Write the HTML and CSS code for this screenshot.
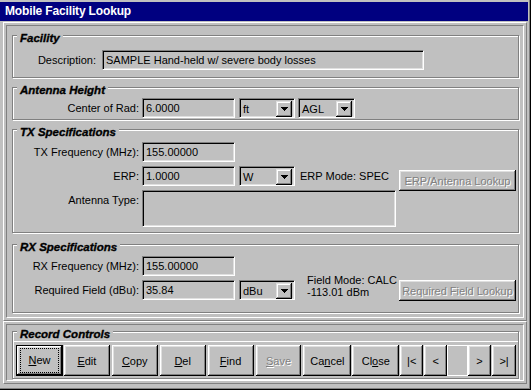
FILE: index.html
```html
<!DOCTYPE html>
<html>
<head>
<meta charset="utf-8">
<link rel="stylesheet" href="styles.css">
</head>
<body>
<div class="window">
  <div class="titlebar">Mobile Facility Lookup</div>
  <div class="panel panel-top">
    <div class="panel-in">
      <div class="group g-fac">
        <div class="gtitle">Facility</div>
        <div class="row r-desc">
          <div class="lbl lbl-desc">Description:</div>
          <div class="field f-desc">SAMPLE Hand-held w/ severe body losses</div>
        </div>
      </div>
      <div class="group g-ant">
        <div class="gtitle">Antenna Height</div>
        <div class="row r-first-ant">
          <div class="lbl">Center of Rad:</div>
          <div class="field f-num">6.0000</div>
          <div class="combo c-unit"><span class="ctext">ft</span><span class="dd"><svg width="7" height="4" viewBox="0 0 7 4"><rect x="0" y="0" width="7" height="1"/><rect x="1" y="1" width="5" height="1"/><rect x="2" y="2" width="3" height="1"/><rect x="3" y="3" width="1" height="1"/></svg></span></div>
          <div class="combo c-agl"><span class="ctext">AGL</span><span class="dd"><svg width="7" height="4" viewBox="0 0 7 4"><rect x="0" y="0" width="7" height="1"/><rect x="1" y="1" width="5" height="1"/><rect x="2" y="2" width="3" height="1"/><rect x="3" y="3" width="1" height="1"/></svg></span></div>
        </div>
      </div>
      <div class="group g-tx">
        <div class="gtitle">TX Specifications</div>
        <div class="row r-tx1">
          <div class="lbl">TX Frequency (MHz):</div>
          <div class="field f-num">155.00000</div>
        </div>
        <div class="row r-tx2">
          <div class="lbl">ERP:</div>
          <div class="field f-num">1.0000</div>
          <div class="combo c-unit"><span class="ctext">W</span><span class="dd"><svg width="7" height="4" viewBox="0 0 7 4"><rect x="0" y="0" width="7" height="1"/><rect x="1" y="1" width="5" height="1"/><rect x="2" y="2" width="3" height="1"/><rect x="3" y="3" width="1" height="1"/></svg></span></div>
          <div class="mode">ERP Mode: SPEC</div>
          <div class="btn btn-dis btn-lookup b-erp">ERP/Antenna Lookup</div>
        </div>
        <div class="row r-tx3">
          <div class="lbl lbl-top">Antenna Type:</div>
          <div class="field f-ant"></div>
        </div>
      </div>
      <div class="group g-rx">
        <div class="gtitle">RX Specifications</div>
        <div class="row r-rx1">
          <div class="lbl">RX Frequency (MHz):</div>
          <div class="field f-num">155.00000</div>
        </div>
        <div class="row r-rx2">
          <div class="lbl">Required Field (dBu):</div>
          <div class="field f-num">35.84</div>
          <div class="combo c-unit"><span class="ctext">dBu</span><span class="dd"><svg width="7" height="4" viewBox="0 0 7 4"><rect x="0" y="0" width="7" height="1"/><rect x="1" y="1" width="5" height="1"/><rect x="2" y="2" width="3" height="1"/><rect x="3" y="3" width="1" height="1"/></svg></span></div>
          <div class="fmode">Field Mode: CALC<br>-113.01 dBm</div>
          <div class="btn btn-dis btn-lookup b-req">Required Field Lookup</div>
        </div>
      </div>
    </div>
  </div>
  <div class="panel panel-bot">
    <div class="panel-in panel-in-bot">
      <div class="group g-rec">
        <div class="gtitle">Record Controls</div>
        <div class="btnbar">
          <div class="btn btn-rec btn-default"><span class="focus"><u>N</u>ew</span></div>
          <div class="btn btn-rec"><u>E</u>dit</div>
          <div class="btn btn-rec"><u>C</u>opy</div>
          <div class="btn btn-rec"><u>D</u>el</div>
          <div class="btn btn-rec"><u>F</u>ind</div>
          <div class="btn btn-rec btn-dis"><u>S</u>ave</div>
          <div class="btn btn-rec b-cancel">Ca<u>n</u>cel</div>
          <div class="btn btn-rec b-close">Cl<u>o</u>se</div>
          <div class="btn btn-nav b-first">|&lt;</div>
          <div class="btn btn-nav b-prev">&lt;</div>
          <div class="navbox"></div>
          <div class="btn btn-nav b-next">&gt;</div>
          <div class="btn btn-nav b-last">&gt;|</div>
        </div>
      </div>
    </div>
  </div>
</div>
</body>
</html>
```
FILE: styles.css
```css
* { box-sizing: border-box; }
html, body { margin: 0; padding: 0; background: #c0c0c0; }
body { font-family: "Liberation Sans", Arial, sans-serif; font-size: 11px; color: #000; }

.window {
  width: 531px;
  height: 390px;
  padding: 2px 3px 3px 0;
  background: #c0c0c0;
  box-shadow: inset -1px -1px 0 #000, inset -2px -2px 0 #808080;
  overflow: hidden;
}

.titlebar {
  height: 19px;
  background: #000080;
  color: #fff;
  font-weight: bold;
  font-size: 12px;
  letter-spacing: -0.15px;
  line-height: 19px;
  padding-left: 5px;
}

.panel {
  margin: 0 1px 0 3px;
  border-top: 1px solid #fff;
  border-left: 1px solid #fff;
  border-right: 1px solid #808080;
  border-bottom: 1px solid #808080;
  padding: 2px;
}
.panel-top { margin-top: 1px; }
.panel-in {
  border-top: 1px solid #808080;
  border-left: 1px solid #808080;
  border-right: 1px solid #fff;
  border-bottom: 1px solid #fff;
  padding: 9px 4px 4px 5px;
}
.panel-in-bot { padding-top: 6px; padding-bottom: 1px; }

.group {
  border: 1px solid #808080;
  box-shadow: inset 1px 1px 0 #fff, 1px 1px 0 #fff;
  margin-bottom: 9px;
}
.group:last-child { margin-bottom: 0; }
.gtitle {
  display: table;
  margin: -4px 0 0 4px;
  padding: 0 3px;
  background: #c0c0c0;
  font-weight: bold;
  font-style: italic;
  font-size: 11.5px;
  line-height: 12px;
  height: 12px;
  -webkit-text-stroke: 0.35px #000;
}

.row { display: flex; align-items: center; }
.lbl { width: 126px; text-align: right; margin-right: 3px; white-space: nowrap; }
.lbl-desc { width: 83px; margin-right: 6px; }
.lbl-top { align-self: flex-start; padding-top: 4px; }

.field {
  height: 20px;
  background: #c0c0c0;
  border-top: 1px solid #808080;
  border-left: 1px solid #808080;
  border-bottom: 1px solid #fff;
  border-right: 1px solid #fff;
  box-shadow: inset 1px 1px 0 #000, inset -1px -1px 0 #dfdfdf;
  padding: 0 3px;
  line-height: 18px;
  white-space: nowrap;
  overflow: hidden;
}
.f-desc { width: 322px; }
.f-num { width: 93px; }
.f-ant { width: 254px; height: 37px; }

.combo {
  display: flex;
  height: 20px;
  width: 56px;
  margin-left: 4px;
  padding: 2px;
  background: #c0c0c0;
  border-top: 1px solid #808080;
  border-left: 1px solid #808080;
  border-bottom: 1px solid #fff;
  border-right: 1px solid #fff;
  box-shadow: inset 1px 1px 0 #000, inset -1px -1px 0 #dfdfdf;
}
.c-agl { width: 57px; margin-left: 3px; }
.ctext { flex: 1; line-height: 16px; padding-left: 1px; }
.dd {
  width: 16px;
  height: 16px;
  display: flex;
  align-items: center;
  justify-content: center;
  background: #c0c0c0;
  box-shadow: inset -1px -1px 0 #000, inset 1px 1px 0 #dfdfdf, inset -2px -2px 0 #808080, inset 2px 2px 0 #fff;
}
.dd svg { display: block; fill: #000; margin-top: 0; }

.mode { margin-left: 5px; line-height: 20px; }
.fmode { margin-left: 12px; line-height: 12px; align-self: flex-start; margin-top: -6px; }

.btn {
  display: flex;
  align-items: center;
  justify-content: center;
  background: #c0c0c0;
  box-shadow: inset -1px -1px 0 #000, inset 1px 1px 0 #fff, inset -2px -2px 0 #808080, inset 2px 2px 0 #dfdfdf;
  white-space: nowrap;
}
.btn-dis { color: #808080; text-shadow: 1px 1px 0 #fff; }
.btn-lookup { width: 117px; height: 21px; margin-left: auto; margin-right: 2px; }
.r-tx2 { align-items: flex-start; }
.r-tx2 .lbl { line-height: 20px; }
.b-erp { margin-top: 4px; margin-bottom: -5px; }
.r-rx2 { align-items: flex-start; }
.r-rx2 .lbl { line-height: 20px; }
.b-req { height: 21px; }

.r-desc { margin-top: 6px; }
.g-fac { padding-bottom: 7px; }
.r-first-ant { margin-top: 2px; }
.g-ant { padding-bottom: 1px; }
.r-tx1 { margin-top: 4px; }
.r-tx2 { margin-top: 4px; }
.r-tx3 { margin-top: 4px; }
.g-tx { padding-bottom: 5px; margin-bottom: 11px; }
.r-rx1 { margin-top: 3px; }
.r-rx2 { margin-top: 4px; }
.g-rx { padding-bottom: 11px; }

.g-rec { padding: 0; }
.btnbar {
  display: flex;
  margin-top: 1px;
  padding: 3px 2px 2px 2px;
  border-top: 1px solid #fff;
  border-left: 1px solid #fff;
}
.btn-rec { width: 46px; height: 31px; margin-right: 2px; }
.btn-default {
  box-shadow: inset 0 0 0 1px #000, inset -2px -2px 0 #000, inset 2px 2px 0 #fff, inset -3px -3px 0 #808080, inset 3px 3px 0 #dfdfdf;
  width: 47px;
  margin-right: 1px;
}
.focus { outline: 1px dotted #000; outline-offset: 0; padding: 3px 5px 3px 6px; }
.btn-default .focus { display: block; width: 37px; height: 23px; line-height: 17px; text-align: center; padding: 3px 0; }
.b-cancel { width: 48px; margin-right: 1px; }
.b-close { width: 47px; margin-right: 1px; }
.btn-nav { width: 23px; height: 31px; }
.b-first { margin-right: 1px; }
.navbox { width: 21px; height: 31px; box-shadow: inset 1px 1px 0 #fff, inset -1px -1px 0 #fff; }
.b-next { margin-right: 1px; }
.b-last { width: 24px; }
```
